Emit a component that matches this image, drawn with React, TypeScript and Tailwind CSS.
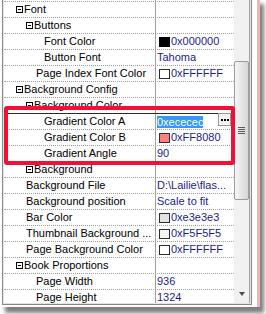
import React from 'react';

type Row = {
  label: string;
  pad: string;
  toggle?: boolean;
  value?: string;
  swatch?: string;
  editing?: boolean;
  selected?: boolean;
};

const rows: Row[] = [
  { label: 'Font', pad: 'pl-[12px]', toggle: true },
  { label: 'Buttons', pad: 'pl-[22px]', toggle: true },
  { label: 'Font Color', pad: 'pl-[40px]', swatch: 'bg-black border-black', value: '0x000000' },
  { label: 'Button Font', pad: 'pl-[40px]', value: 'Tahoma' },
  { label: 'Page Index Font Color', pad: 'pl-[32px]', swatch: 'bg-white border-[#303030]', value: '0xFFFFFF' },
  { label: 'Background Config', pad: 'pl-[12px]', toggle: true },
  { label: 'Background Color', pad: 'pl-[22px]', toggle: true, selected: true },
  { label: 'Gradient Color A', pad: 'pl-[40px]', editing: true, value: '0xececec' },
  { label: 'Gradient Color B', pad: 'pl-[40px]', swatch: 'bg-[#ff8080] border-[#303030]', value: '0xFF8080' },
  { label: 'Gradient Angle', pad: 'pl-[40px]', value: '90' },
  { label: 'Background', pad: 'pl-[22px]', toggle: true },
  { label: 'Background File', pad: 'pl-[22px]', value: 'D:\\Lailie\\flas...' },
  { label: 'Background position', pad: 'pl-[22px]', value: 'Scale to fit' },
  { label: 'Bar Color', pad: 'pl-[22px]', swatch: 'bg-[#e3e3e3] border-[#303030]', value: '0xe3e3e3' },
  { label: 'Thumbnail Background ...', pad: 'pl-[22px]', swatch: 'bg-[#f5f5f5] border-[#303030]', value: '0xF5F5F5' },
  { label: 'Page Background Color', pad: 'pl-[22px]', swatch: 'bg-white border-[#303030]', value: '0xFFFFFF' },
  { label: 'Book Proportions', pad: 'pl-[12px]', toggle: true },
  { label: 'Page Width', pad: 'pl-[32px]', value: '936' },
  { label: 'Page Height', pad: 'pl-[32px]', value: '1324' },
];

const Toggle = () => (
  <span className="flex items-center justify-center w-[7px] h-[7px] border border-black bg-white shrink-0">
    <span className="w-[3px] h-[1px] bg-black" />
  </span>
);

const ValueCell: React.FC<{ row: Row }> = ({ row }) => {
  if (row.editing) {
    return (
      <div className="w-[79px] border-l border-solid border-[#a0a0a0] bg-white flex items-center">
        <span className="ml-[1px] h-[12px] leading-[12px] bg-[#3399ff] text-white">{row.value}</span>
        <span className="ml-auto mr-[3px] self-start -mt-[1px] w-[13px] h-[13px] border border-[#9a9a9a] bg-[#f4f4f4] flex items-center justify-center gap-[1px]">
          <span className="w-[2px] h-[2px] bg-black" />
          <span className="w-[2px] h-[2px] bg-black" />
          <span className="w-[2px] h-[2px] bg-black" />
        </span>
      </div>
    );
  }
  return (
    <div className="w-[79px] border-l border-solid border-[#a0a0a0] flex items-center text-[#1c1c94] whitespace-nowrap overflow-hidden">
      {row.swatch ? (
        <>
          <span className={`ml-[3px] w-[11px] h-[10px] border shrink-0 ${row.swatch}`} />
          <span className="ml-[1px]">{row.value}</span>
        </>
      ) : (
        <span className="pl-[1px]">{row.value}</span>
      )}
    </div>
  );
};

const App: React.FC = () => {
  return (
    <div className="relative w-[266px] h-[314px] bg-white overflow-hidden font-['Liberation_Sans',Arial,sans-serif] text-[11px] leading-[15px] text-black">
      <div className="w-[257px] h-[307px] bg-white shadow-[3px_0_0_0_#f0b4b4,6px_5px_4px_1px_rgba(0,0,0,0.5)]">
        <div className="ml-[2px] w-[250px] h-[305px] border-x border-b border-[#8a8a8a]">
          <div className="h-[304px] border-x border-b border-[#e4e4e4] flex">
            <div className="w-[230px] h-[303px] overflow-hidden">
              <div className="flex h-[2px] border-b border-dotted border-[#a0a0a0]">
                <div className="w-[151px]" />
                <div className="w-[79px] border-l border-solid border-[#a0a0a0]" />
              </div>
              {rows.map((row) => (
                <div
                  key={row.label}
                  className={`flex h-[16px] border-b ${row.selected ? 'border-solid border-[#2b2b2b]' : 'border-dotted border-[#a0a0a0]'}`}
                >
                  <div className={`w-[151px] flex items-center whitespace-nowrap overflow-hidden ${row.pad}`}>
                    {row.toggle && <Toggle />}
                    <span className={row.toggle ? 'ml-[1px]' : ''}>{row.label}</span>
                  </div>
                  <ValueCell row={row} />
                </div>
              ))}
            </div>
            <div className="w-[16px] h-[303px] border-r border-[#a0a0a0] bg-[#f1f1f1] flex flex-col">
              <div className="mt-[61px] h-[139px] border border-[#9c9c9c] rounded-[2px] bg-linear-to-r from-[#f6f6f6] to-[#d6d6d6] flex flex-col items-center justify-center gap-[1px]">
                <span className="w-[7px] h-[1px] bg-[#5a5a5a]" />
                <span className="w-[7px] h-[1px] bg-[#5a5a5a]" />
                <span className="w-[7px] h-[1px] bg-[#5a5a5a]" />
                <span className="w-[7px] h-[1px] bg-[#5a5a5a]" />
              </div>
              <div className="flex-1" />
              <div className="h-[16px] pb-[2px] flex items-center justify-center">
                <span className="w-0 h-0 border-x-[3px] border-x-transparent border-t-[4px] border-t-[#4a4a4a]" />
              </div>
            </div>
          </div>
        </div>
      </div>
      <div className="absolute left-[4px] top-[106px] w-[231px] h-[59px] border-4 border-[#f50f35] rounded-[3px] pointer-events-none" />
    </div>
  );
};

export default App;
